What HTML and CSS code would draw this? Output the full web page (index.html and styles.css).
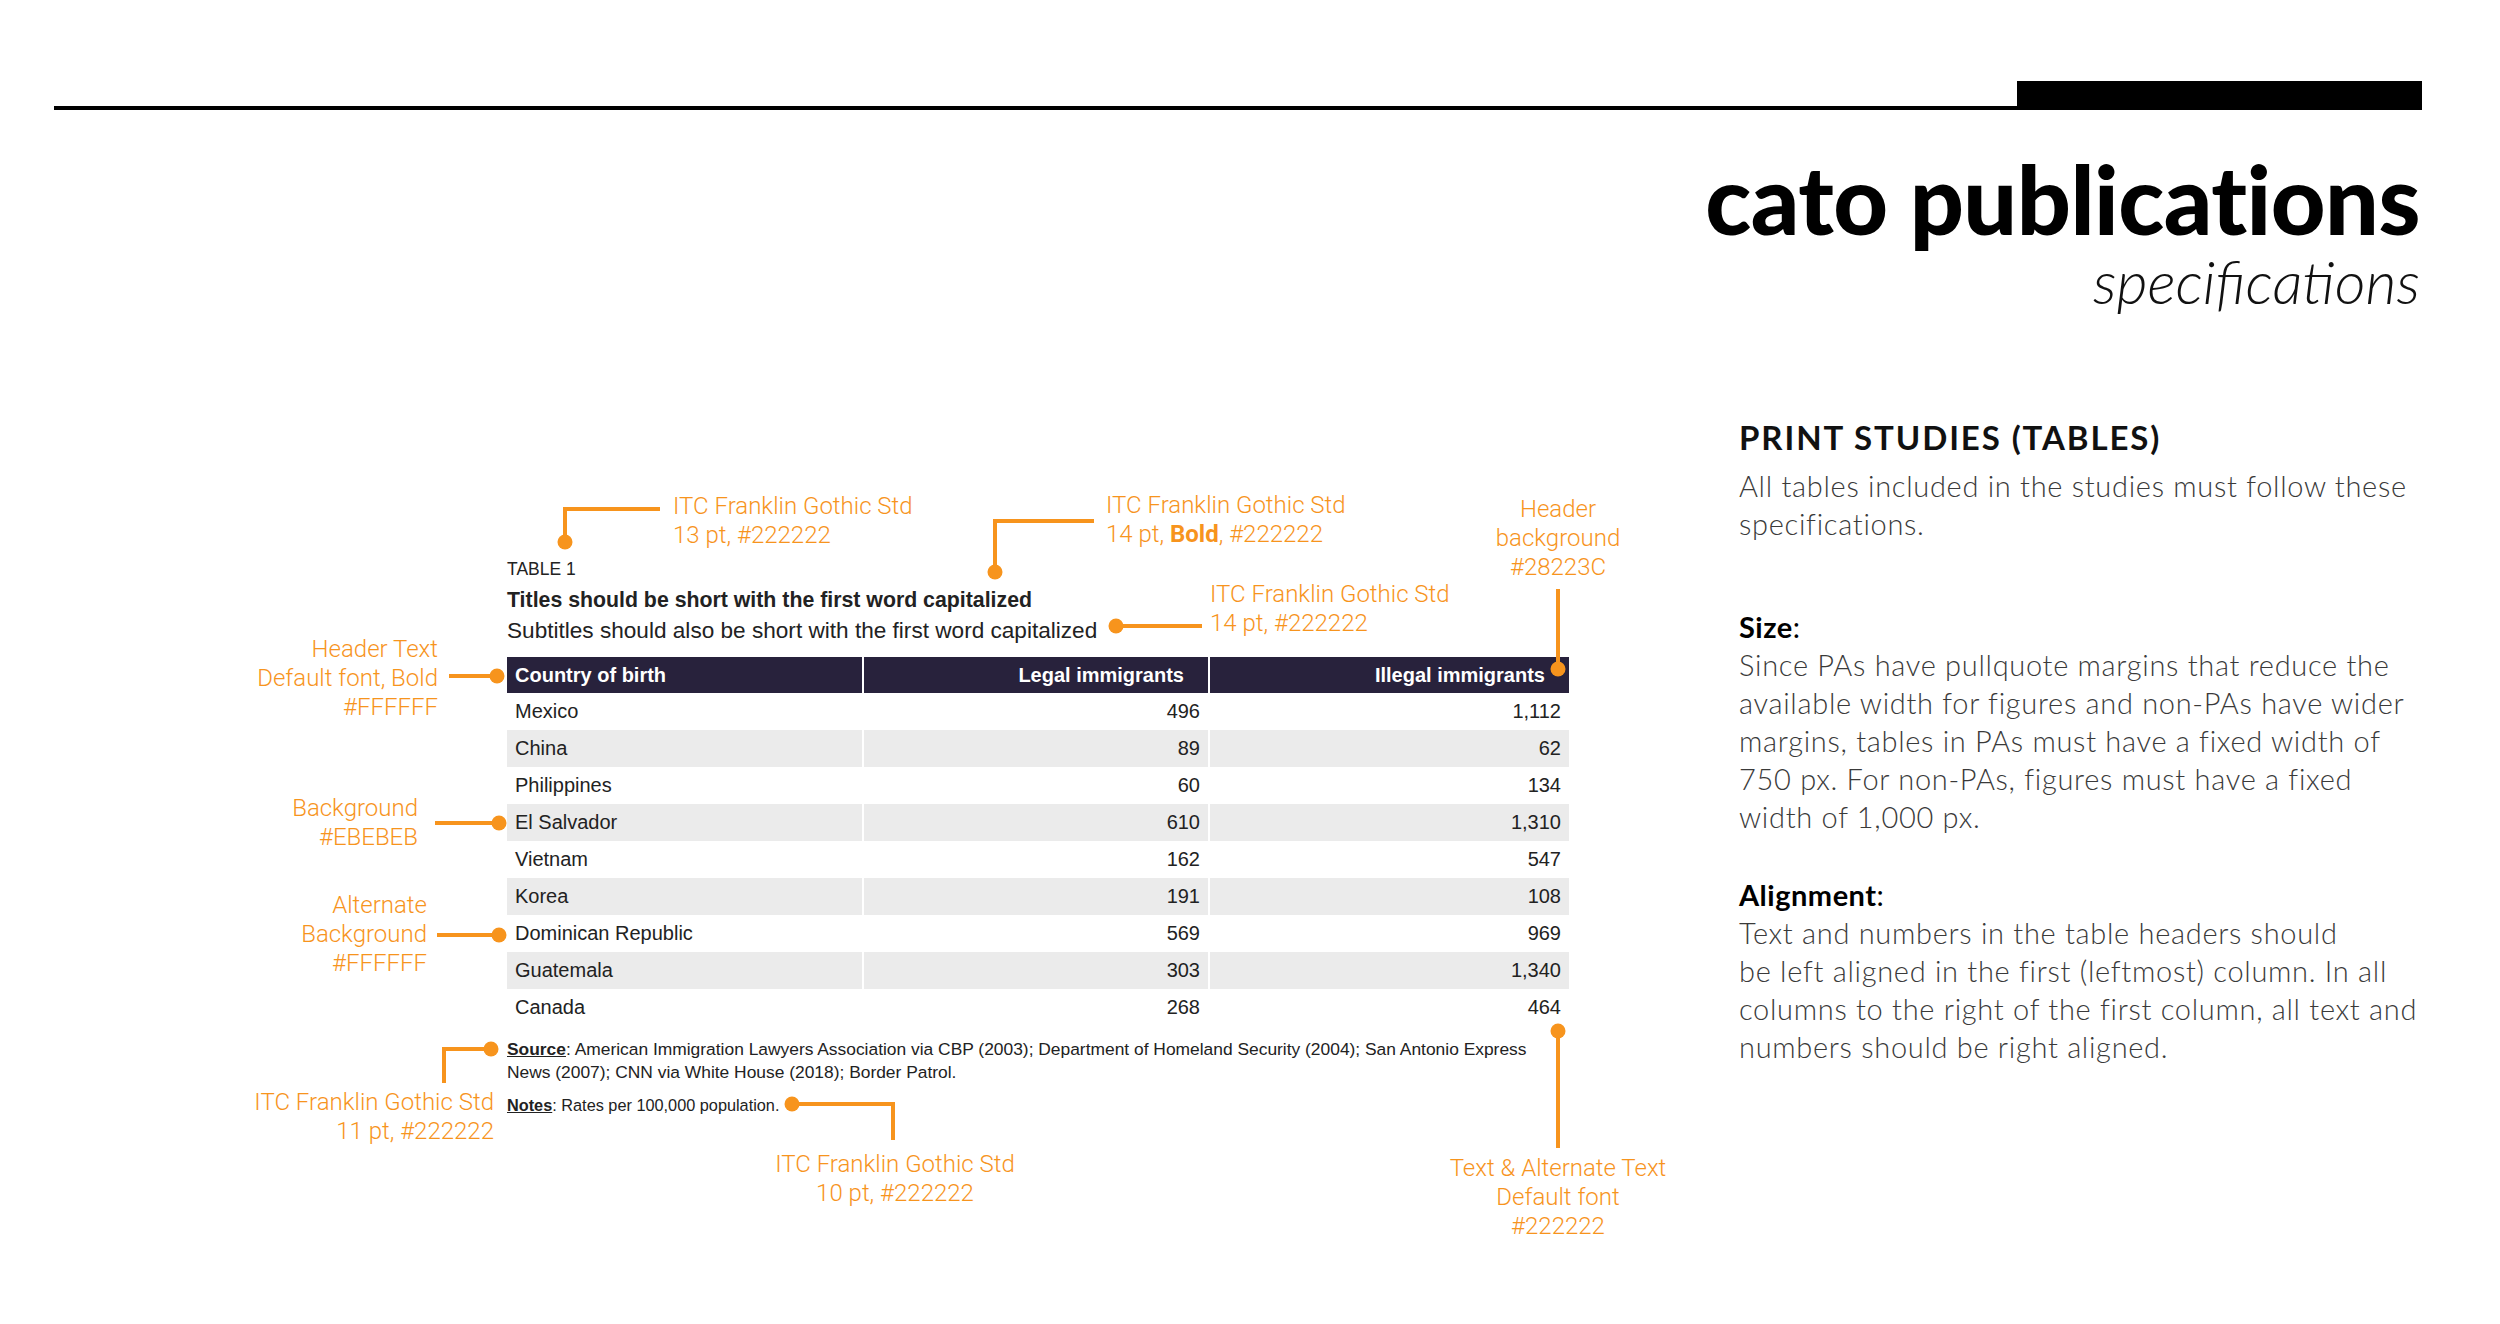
FILE: index.html
```html
<!DOCTYPE html>
<html lang="en">
<head>
<meta charset="utf-8">
<title>cato publications specifications</title>
<link rel="stylesheet" href="styles.css">
</head>
<body>
<div class="page">
  <div class="rule-row">
    <div class="rule-line"></div>
    <div class="rule-bar"></div>
  </div>
  <div class="brand">
    <div class="brand-name">cato publications</div>
    <div class="brand-sub">specifications</div>
  </div>

  <div class="main">
    <div class="diagram">
      <div class="figure">
        <div class="fig-label">TABLE 1</div>
        <div class="fig-title">Titles should be short with the first word capitalized</div>
        <div class="fig-sub">Subtitles should also be short with the first word capitalized</div>
        <table class="data">
          <colgroup><col class="c1"><col class="c2"><col class="c3"></colgroup>
          <thead>
            <tr><th class="left">Country of birth</th><th>Legal immigrants</th><th>Illegal immigrants</th></tr>
          </thead>
          <tbody>
            <tr><td>Mexico</td><td>496</td><td>1,112</td></tr>
            <tr><td>China</td><td>89</td><td>62</td></tr>
            <tr><td>Philippines</td><td>60</td><td>134</td></tr>
            <tr><td>El Salvador</td><td>610</td><td>1,310</td></tr>
            <tr><td>Vietnam</td><td>162</td><td>547</td></tr>
            <tr><td>Korea</td><td>191</td><td>108</td></tr>
            <tr><td>Dominican Republic</td><td>569</td><td>969</td></tr>
            <tr><td>Guatemala</td><td>303</td><td>1,340</td></tr>
            <tr><td>Canada</td><td>268</td><td>464</td></tr>
          </tbody>
        </table>
        <p class="fig-source"><b class="u">Source</b>: American Immigration Lawyers Association via CBP (2003); Department of Homeland Security (2004); San Antonio Express<br>News (2007); CNN via White House (2018); Border Patrol.</p>
        <p class="fig-notes"><b class="u">Notes</b>: Rates per 100,000 population.</p>
      </div>
    </div>

    <div class="spec">
      <h2 class="spec-head">PRINT STUDIES (TABLES)</h2>
      <p class="spec-text">All tables included in the studies must follow these<br>specifications.</p>
      <h3 class="spec-sub">Size<span class="colon">:</span></h3>
      <p class="spec-text">Since PAs have pullquote margins that reduce the<br>available width for figures and non-PAs have wider<br>margins, tables in PAs must have a fixed width of<br>750 px. For non-PAs, figures must have a fixed<br>width of 1,000 px.</p>
      <h3 class="spec-sub spec-sub-2">Alignment<span class="colon">:</span></h3>
      <p class="spec-text">Text and numbers in the table headers should<br>be left aligned in the first (leftmost) column. In all<br>columns to the right of the first column, all text and<br>numbers should be right aligned.</p>
    </div>
  </div>

  <svg class="connectors" width="2500" height="1324" viewBox="0 0 2500 1324" aria-hidden="true">
    <g fill="none" stroke="#F7941D" stroke-width="4" stroke-linejoin="miter">
      <polyline points="565,542 565,509 660,509"/>
      <polyline points="995,572 995,521 1094,521"/>
      <polyline points="1116,626 1202,626"/>
      <polyline points="1558,589 1558,669"/>
      <polyline points="449,676 497,676"/>
      <polyline points="435,823 499,823"/>
      <polyline points="437,935 499,935"/>
      <polyline points="444,1083 444,1049 491,1049"/>
      <polyline points="792,1104 893,1104 893,1140"/>
      <polyline points="1558,1031 1558,1148"/>
    </g>
    <g fill="#F7941D">
      <circle cx="565" cy="542" r="7.5"/>
      <circle cx="995" cy="572" r="7.5"/>
      <circle cx="1116" cy="626" r="7.5"/>
      <circle cx="1558" cy="669" r="7.5"/>
      <circle cx="497" cy="676" r="7.5"/>
      <circle cx="499" cy="823" r="7.5"/>
      <circle cx="499" cy="935" r="7.5"/>
      <circle cx="491" cy="1049" r="7.5"/>
      <circle cx="792" cy="1104" r="7.5"/>
      <circle cx="1558" cy="1031" r="7.5"/>
    </g>
  </svg>

  <div class="callout c-a">ITC Franklin Gothic Std<br>13 pt, #222222</div>
  <div class="callout c-b">ITC Franklin Gothic Std<br>14 pt, <b>Bold</b>, #222222</div>
  <div class="callout c-c">ITC Franklin Gothic Std<br>14 pt, #222222</div>
  <div class="callout c-d">Header<br>background<br>#28223C</div>
  <div class="callout c-e">Header Text<br>Default font, Bold<br>#FFFFFF</div>
  <div class="callout c-f">Background<br>#EBEBEB</div>
  <div class="callout c-g">Alternate<br>Background<br>#FFFFFF</div>
  <div class="callout c-h">ITC Franklin Gothic Std<br>11 pt, #222222</div>
  <div class="callout c-i">ITC Franklin Gothic Std<br>10 pt, #222222</div>
  <div class="callout c-j">Text &amp; Alternate Text<br>Default font<br>#222222</div>
</div>
</body>
</html>
```

FILE: styles.css
```css
html, body {
  margin: 0;
  padding: 0;
  background: #ffffff;
}

.page {
  position: relative;
  width: 2500px;
  height: 1324px;
  overflow: hidden;
  background: #ffffff;
  font-family: "Liberation Sans", Arial, sans-serif;
  color: #222222;
}

/* top rule */
.rule-row {
  display: flex;
  align-items: flex-end;
  padding: 81px 78px 0 54px;
}
.rule-line {
  flex: 1;
  height: 4px;
  background: #000;
}
.rule-bar {
  width: 405px;
  height: 29px;
  background: #000;
}

/* brand */
.brand {
  text-align: right;
  padding-right: 80px;
  font-family: Lato, "Open Sans", sans-serif;
  color: #000;
}
.brand-name {
  margin-top: 43px;
  font-size: 95px;
  line-height: 90px;
  font-weight: 900;
  letter-spacing: -0.5px;
}
.brand-sub {
  margin-top: 10px;
  font-size: 60px;
  line-height: 56px;
  font-weight: 300;
  font-style: italic;
  color: #111;
}

/* main area */
.main {
  position: absolute;
  left: 0;
  top: 400px;
  width: 2500px;
  display: flex;
}
.diagram {
  width: 1739px;
  flex: none;
}
.figure {
  margin-left: 507px;
  margin-top: 159px;
  width: 1062px;
}
.fig-label {
  font-size: 17.5px;
  line-height: 20px;
}
.fig-title {
  margin-top: 8px;
  font-size: 21.3px;
  line-height: 26px;
  font-weight: 700;
}
.fig-sub {
  margin-top: 4px;
  font-size: 22.6px;
  line-height: 27px;
  margin-bottom: 13px;
}

table.data {
  width: 1062px;
  table-layout: fixed;
  border-collapse: separate;
  border-spacing: 0;
  font-size: 20px;
  color: #222;
}
col.c1 { width: 355px; }
col.c2 { width: 346px; }
col.c3 { width: 361px; }

table.data th {
  height: 36px;
  padding: 0 24px 0 8px;
  background: #28223C;
  color: #fff;
  font-weight: 700;
  text-align: right;
  box-sizing: border-box;
}
table.data th.left {
  text-align: left;
}
table.data td {
  height: 37px;
  padding: 0 8px;
  text-align: right;
  box-sizing: border-box;
}
table.data td:first-child {
  text-align: left;
}
table.data th + th,
table.data td + td {
  border-left: 2px solid #fff;
}
table.data tbody tr:nth-child(even) td {
  background: #EBEBEB;
}

.fig-source {
  margin: 12px 0 0;
  font-size: 17.4px;
  line-height: 23px;
}
.fig-notes {
  margin: 11px 0 0;
  font-size: 16.3px;
  line-height: 20px;
}
.u {
  text-decoration: underline;
}

/* spec column */
.spec {
  flex: 1;
  font-family: Lato, "Open Sans", sans-serif;
}
.spec-head {
  margin: 18px 0 0;
  font-size: 33px;
  line-height: 38px;
  font-weight: 700;
  color: #111;
  letter-spacing: 1.9px;
}
.spec-text {
  margin: 11px 0 0;
  font-size: 29px;
  line-height: 38px;
  font-weight: 300;
  letter-spacing: 0.7px;
  color: #3a3a3a;
}
.spec-sub {
  margin: 65px 0 0;
  font-size: 29px;
  line-height: 38px;
  font-weight: 700;
  letter-spacing: 0.5px;
  color: #000;
}
.spec-sub + .spec-text {
  margin-top: 0;
}
.spec-sub-2 {
  margin-top: 40px;
}
.colon {
  font-weight: 400;
}

/* annotations */
.connectors {
  position: absolute;
  left: 0;
  top: 0;
  pointer-events: none;
}
.callout {
  position: absolute;
  font-family: Roboto, "Open Sans", sans-serif;
  font-weight: 300;
  font-size: 24px;
  line-height: 29px;
  color: #F7941D;
  white-space: nowrap;
}
.callout b {
  font-weight: 700;
}
.c-a { left: 673px; top: 492px; }
.c-b { left: 1106px; top: 491px; }
.c-c { left: 1210px; top: 580px; }
.c-d { left: 1458px; width: 200px; top: 495px; text-align: center; }
.c-e { right: 2062px; top: 635px; text-align: right; }
.c-f { right: 2082px; top: 794px; text-align: right; }
.c-g { right: 2073px; top: 891px; text-align: right; }
.c-h { right: 2006px; top: 1088px; text-align: right; }
.c-i { left: 745px; width: 300px; top: 1150px; text-align: center; }
.c-j { left: 1408px; width: 300px; top: 1154px; text-align: center; }
```
